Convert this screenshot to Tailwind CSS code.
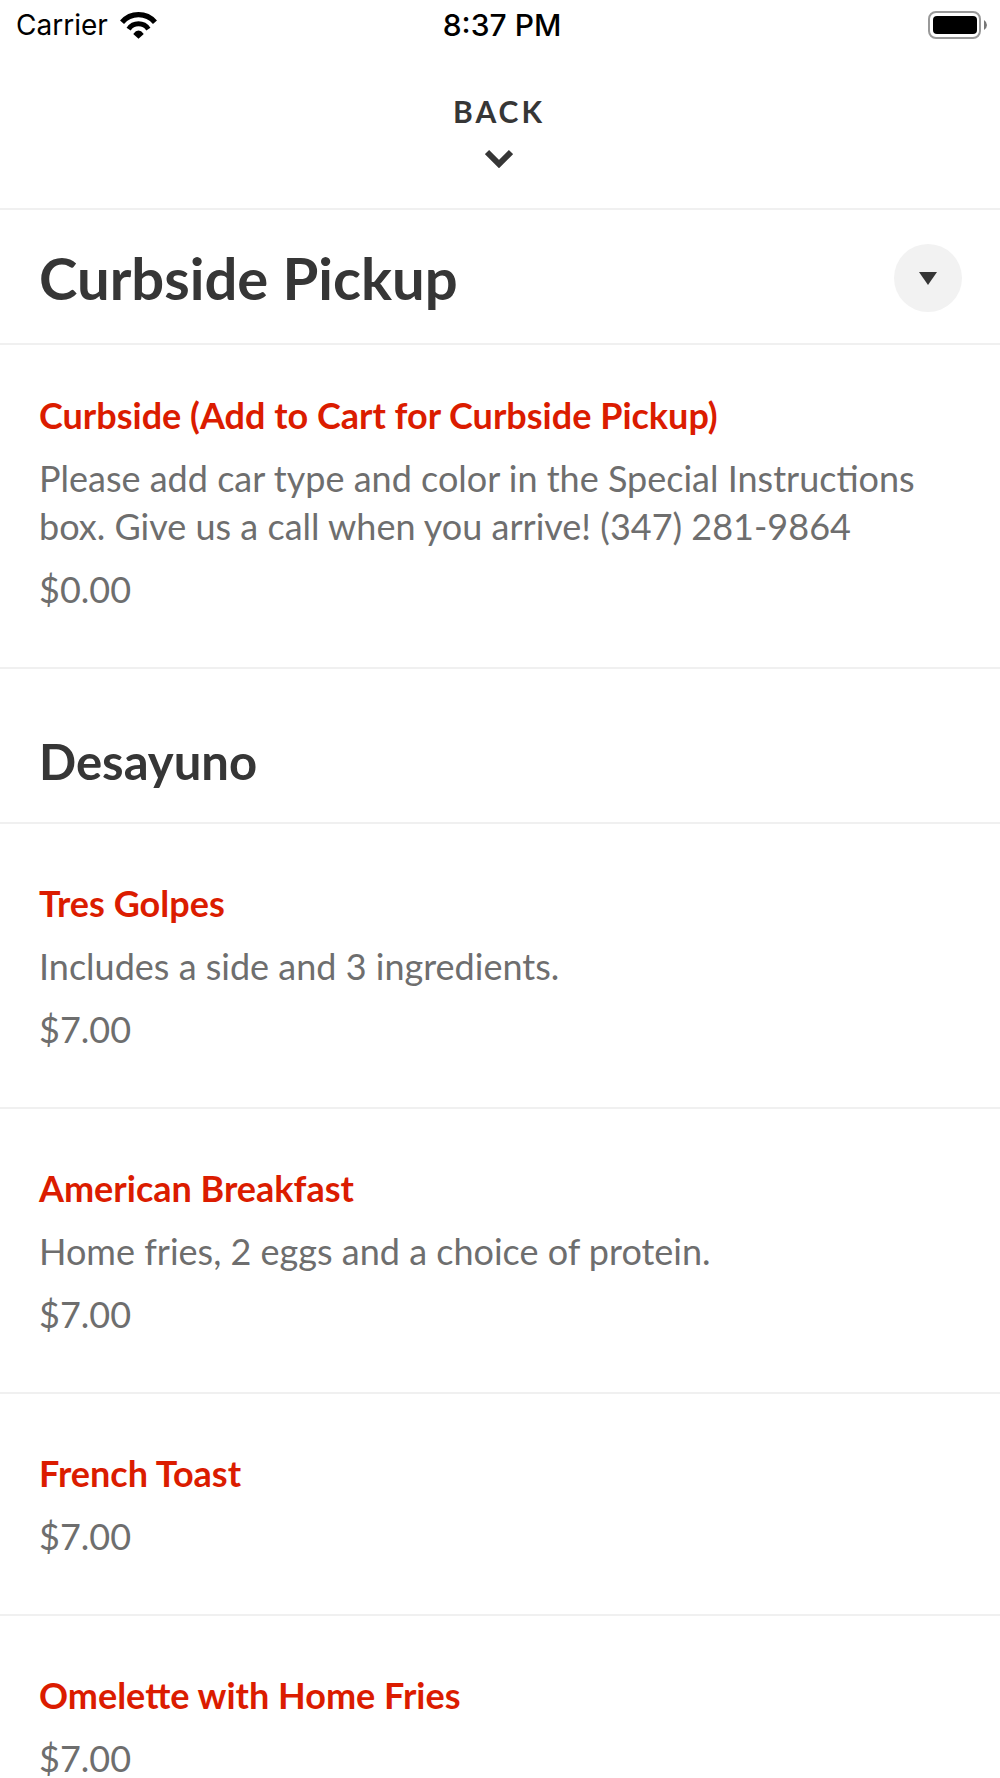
<!DOCTYPE html>
<html lang="en">
<head>
  <meta charset="UTF-8" />
  <meta name="viewport" content="width=device-width, initial-scale=1.0"/>
  <title>Menu</title>
  <script src="https://cdn.jsdelivr.net/npm/@tailwindcss/browser@4"></script>
</head>
<body class="bg-white text-[#363636] font-['Lato',sans-serif] h-screen overflow-hidden">
  <!-- Status bar -->
  <div class="grid grid-cols-3 items-center h-[50px] pl-4 pr-3 text-black font-['Inter',sans-serif]">
    <div class="flex items-center gap-3">
      <span class="text-[28px]">Carrier</span>
      <svg class="w-[37px] h-[27px]" viewBox="0 0 110 82" fill="none" stroke="#000">
        <path d="M5 31A66 66 0 0 1 105 31" stroke-width="16"/>
        <path d="M25 52A36 36 0 0 1 85 52" stroke-width="15"/>
        <path d="M39 67q16-21 32 0L55 81z" fill="#000" stroke="none"/>
      </svg>
    </div>
    <span class="text-center text-[30px] font-medium">8:37 PM</span>
    <svg class="justify-self-end w-[60px] h-[28px]" viewBox="0 0 60 28">
      <rect x="1" y="1" width="51" height="26" rx="7" fill="none" stroke="#999" stroke-width="2"/>
      <rect x="5" y="5" width="44" height="18" rx="4" fill="#000"/>
      <path d="M56 9q3 2 3 5t-3 5z" fill="#777"/>
    </svg>
  </div>

  <!-- Back -->
  <header class="flex justify-center pt-[43px] pb-9 pr-[2px] border-b-2 border-[#f0f0f0]">
    <button class="flex flex-col items-center gap-5 h-[79px] text-[30px] leading-9 font-bold tracking-[3px]">
      BACK
      <svg class="w-[28px] h-[19px]" viewBox="0 0 28 19" fill="none" stroke="#363636" stroke-width="6"><path d="M2 3l12 12L26 3"/></svg>
    </button>
  </header>

  <main>
    <!-- Current section -->
    <div class="flex items-center justify-between pt-[34px] pb-[31px] pl-[39px] pr-[38px] border-b-2 border-[#f0f0f0]">
      <h1 class="text-[58px] leading-[68px] font-bold">Curbside Pickup</h1>
      <button class="flex items-center justify-center size-[68px] rounded-full bg-[#f2f2f2]" aria-label="Choose section">
        <svg class="w-[18px] h-[13px]" viewBox="0 0 18 13"><path d="M0 0h18L9 13z" fill="#363636"/></svg>
      </button>
    </div>
    <article class="flex flex-col gap-[15px] px-[39px] pt-[46px] pb-[54px] border-b-2 border-[#f0f0f0] text-[36px] leading-[48px] text-[#6e6e6e]">
      <h3 class="font-bold text-[#db1c00]">Curbside (Add to Cart for Curbside Pickup)</h3>
      <p>Please add car type and color in the Special Instructions box. Give us a call when you arrive! (347) 281-9864</p>
      <p>$0.00</p>
    </article>

    <!-- Desayuno -->
    <h2 class="px-[39px] pt-[62px] pb-[31px] border-b-2 border-[#f0f0f0] text-[49px] leading-[60px] font-bold">Desayuno</h2>
    <article class="flex flex-col gap-[15px] px-[39px] pt-[55px] pb-[54px] border-b-2 border-[#f0f0f0] text-[36px] leading-[48px] text-[#6e6e6e]">
      <h3 class="font-bold text-[#db1c00]">Tres Golpes</h3>
      <p>Includes a side and 3 ingredients.</p>
      <p>$7.00</p>
    </article>
    <article class="flex flex-col gap-[15px] px-[39px] pt-[55px] pb-[54px] border-b-2 border-[#f0f0f0] text-[36px] leading-[48px] text-[#6e6e6e]">
      <h3 class="font-bold text-[#db1c00]">American Breakfast</h3>
      <p>Home fries, 2 eggs and a choice of protein.</p>
      <p>$7.00</p>
    </article>
    <article class="flex flex-col gap-[15px] px-[39px] pt-[55px] pb-[54px] border-b-2 border-[#f0f0f0] text-[36px] leading-[48px] text-[#6e6e6e]">
      <h3 class="font-bold text-[#db1c00]">French Toast</h3>
      <p>$7.00</p>
    </article>
    <article class="flex flex-col gap-[15px] px-[39px] pt-[55px] pb-[54px] border-b-2 border-[#f0f0f0] text-[36px] leading-[48px] text-[#6e6e6e]">
      <h3 class="font-bold text-[#db1c00]">Omelette with Home Fries</h3>
      <p>$7.00</p>
    </article>
  </main>
</body>
</html>
